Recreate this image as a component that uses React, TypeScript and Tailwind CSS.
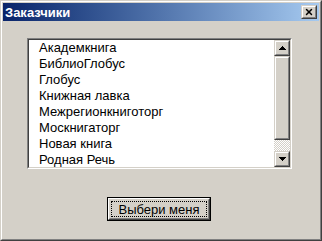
import { X } from 'lucide-react';

const customers = [
  'Академкнига',
  'БиблиоГлобус',
  'Глобус',
  'Книжная лавка',
  'Межрегионкниготорг',
  'Москнигаторг',
  'Новая книга',
  'Родная Речь',
];

function ArrowUp() {
  return (
    <svg width="7" height="4" viewBox="0 0 7 4" shapeRendering="crispEdges">
      <path d="M3 0h1v1h1v1h1v1h1v1H0V3h1V2h1V1h1z" fill="#000" />
    </svg>
  );
}

function ArrowDown() {
  return (
    <svg width="7" height="4" viewBox="0 0 7 4" shapeRendering="crispEdges">
      <path d="M0 0h7v1H6v1H5v1H4v1H3V3H2V2H1V1H0z" fill="#000" />
    </svg>
  );
}

// raised 3d box, the classic two-pixel bevel
function Raised({ className, children }: { className: string; children?: React.ReactNode }) {
  return (
    <div className={`border border-t-[#d4d0c8] border-l-[#d4d0c8] border-r-[#404040] border-b-[#404040] ${className}`}>
      <div className="w-full h-full border border-t-white border-l-white border-r-[#808080] border-b-[#808080] bg-[#d4d0c8] flex items-center justify-center">
        {children}
      </div>
    </div>
  );
}

export default function App() {
  return (
    <div className="w-[322px] h-[241px] border border-t-[#d4d0c8] border-l-[#d4d0c8] border-r-[#404040] border-b-[#404040] font-['Liberation_Sans',Arial,sans-serif]">
      <div className="w-full h-full border border-t-white border-l-white border-r-[#808080] border-b-[#808080] bg-[#d4d0c8] p-px flex flex-col">
        {/* Title bar */}
        <div className="h-[18px] flex items-center justify-between bg-gradient-to-r from-[#0a246a] to-[#a6caf0] pl-[2px] pr-[2px]">
          <span className="text-white font-bold text-[13px] leading-none">Заказчики</span>
          <Raised className="w-[16px] h-[14px]">
            <X className="w-[10px] h-[10px] text-black" strokeWidth={3.5} />
          </Raised>
        </div>

        {/* Body */}
        <div className="flex-1 flex flex-col pt-[17px] pl-[24px]">
          {/* List box */}
          <div className="w-[265px] h-[131px] border border-t-[#808080] border-l-[#808080] border-r-white border-b-white">
            <div className="w-full h-full border border-t-[#404040] border-l-[#404040] border-r-[#d4d0c8] border-b-[#d4d0c8] bg-white flex">
              <div className="flex-1 overflow-hidden">
                {customers.map((c) => (
                  <div key={c} className="h-[16px] pl-[10px] text-[13px] leading-[16px] text-black whitespace-nowrap">
                    {c}
                  </div>
                ))}
              </div>
              <div className="w-[16px] flex flex-col">
                <Raised className="w-[16px] h-[16px]">
                  <ArrowUp />
                </Raised>
                <Raised className="w-[16px] h-[84px]" />
                <div className="flex-1 bg-[repeating-conic-gradient(#d4d0c8_0_25%,#ffffff_0_50%)] bg-[length:2px_2px]" />
                <Raised className="w-[16px] h-[16px]">
                  <ArrowDown />
                </Raised>
              </div>
            </div>
          </div>

          {/* Button */}
          <div className="mt-[28px] ml-[80px] w-[104px] h-[24px] border border-black">
            <div className="w-full h-full border border-t-white border-l-white border-r-[#404040] border-b-[#404040]">
              <div className="w-full h-full border border-t-[#d4d0c8] border-l-[#d4d0c8] border-r-[#808080] border-b-[#808080] bg-[#d4d0c8] p-[1px]">
                <div className="w-full h-full border border-dotted border-black flex items-center justify-center text-[13px] text-black leading-none">
                  Выбери меня
                </div>
              </div>
            </div>
          </div>
        </div>
      </div>
    </div>
  );
}
